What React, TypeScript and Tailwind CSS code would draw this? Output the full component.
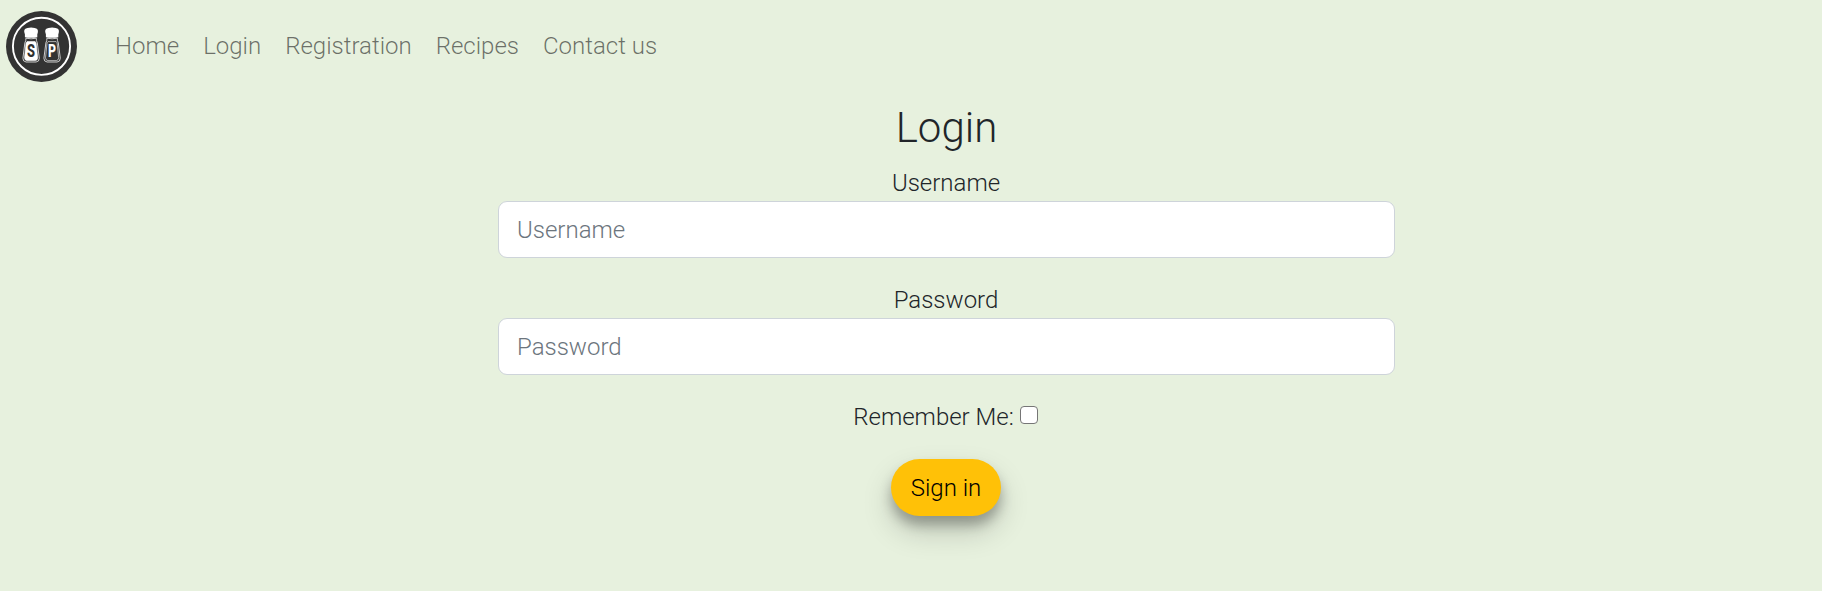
const links = ['Home', 'Login', 'Registration', 'Recipes', 'Contact us'];

function Shaker({ letter, filled }: { letter: string; filled: boolean }) {
  return (
    <g>
      <path d="M1.2 5.8 C0.2 2.4 2.2 1.2 4.2 0.9 Q7.8 -0.5 11.4 0.9 C13.4 1.2 15.4 2.4 14.4 5.8 L14 7 V10 Q7.8 11.2 1.6 10 V7 Z" fill="#fff" />
      <path d="M2.6 11 Q7.8 12.2 13 11 Q12.8 13.4 14 15.6 L16 31 Q16 34.6 12.8 34.8 H2.8 Q-0.4 34.6 -0.4 31 L1.6 15.6 Q2.8 13.4 2.6 11 Z" fill="none" stroke="#fff" strokeWidth="0.75" />
      <path d="M3.8 14.4 H11.8 Q12.7 15 12.9 16.4 L14.4 30.6 Q14.2 33.2 12 33.4 H3.6 Q1.4 33.2 1.2 30.6 L2.7 16.4 Q2.9 15 3.8 14.4 Z" fill={filled ? '#fff' : 'none'} stroke="#fff" strokeWidth="0.6" />
      <text x="7.8" y="30" textAnchor="middle" fontSize="18" fontWeight="800" fill={filled ? '#303030' : '#fff'} textLength="8" lengthAdjust="spacingAndGlyphs">
        {letter}
      </text>
    </g>
  );
}

function Logo() {
  return (
    <svg width="71" height="71" viewBox="0 0 71 71" className="shrink-0 font-['Roboto',sans-serif]">
      <circle cx="35.5" cy="35.5" r="35.5" fill="#333" />
      <circle cx="35.5" cy="35.3" r="28.6" fill="none" stroke="#fff" strokeWidth="1.9" />
      <g transform="translate(17.3 16.2)"><Shaker letter="S" filled /></g>
      <g transform="translate(38.3 16.2)"><Shaker letter="P" filled={false} /></g>
    </svg>
  );
}

function Field({ label, type }: { label: string; type: string }) {
  return (
    <label className="mb-6 block">
      <span className="block pr-px">{label}</span>
      <input
        type={type}
        placeholder={label}
        className="block h-[57px] w-full rounded-[9px] border border-[#ced4da] bg-white px-[18px] placeholder:text-[#6c757d]"
      />
    </label>
  );
}

export default function App() {
  return (
    <div className="min-h-screen bg-[#e7f1de] font-['Roboto',sans-serif] text-2xl/9 font-light text-[#212529]">
      <nav className="flex h-[93px] items-center pl-1.5">
        <Logo />
        <ul className="ml-[26px] flex pb-0.5 text-black/55">
          {links.map((l) => (
            <li key={l}><a href="#" className="block px-3">{l}</a></li>
          ))}
        </ul>
      </nav>
      <main className="ml-[498px] w-[897px] pt-[9px] text-center">
        <h2 className="mb-3 text-[42px]/[51px]">Login</h2>
        <form>
          <Field label="Username" type="text" />
          <Field label="Password" type="password" />
          <label className="mb-6 flex items-center justify-center gap-1.5 pr-[2px]">
            Remember Me:
            <input type="checkbox" className="mb-1 size-[18px] appearance-none rounded-[4px] border-[1.5px] border-[#767676] bg-white" />
          </label>
          <button type="button" className="mr-px h-[57px] w-[110px] rounded-full bg-[#ffc107] text-black shadow-[0_15px_30px_rgba(0,0,0,0.19),0_9px_12px_rgba(0,0,0,0.25)]">
            Sign in
          </button>
        </form>
      </main>
    </div>
  );
}
